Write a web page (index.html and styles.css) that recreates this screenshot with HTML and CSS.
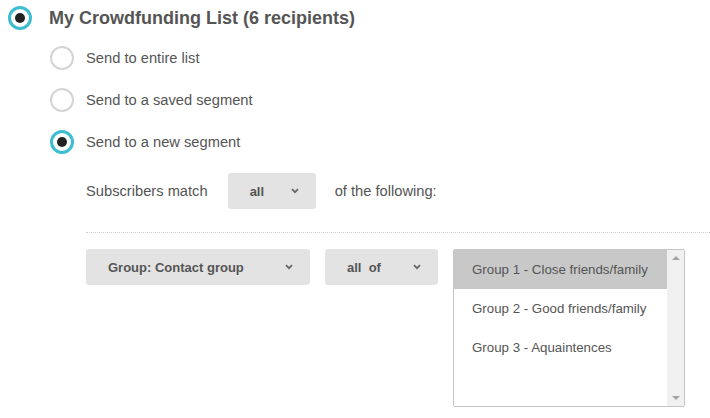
FILE: index.html
```html
<!DOCTYPE html>
<html>
<head>
<meta charset="utf-8">
<link rel="stylesheet" href="styles.css">
</head>
<body>
<div class="page">
  <div class="list-row">
    <span class="radio radio-lg checked"></span>
    <span class="list-title">My Crowdfunding List (6 recipients)</span>
  </div>
  <div class="options">
    <div class="opt"><span class="radio"></span><span class="opt-label">Send to entire list</span></div>
    <div class="opt"><span class="radio"></span><span class="opt-label">Send to a saved segment</span></div>
    <div class="opt"><span class="radio checked"></span><span class="opt-label">Send to a new segment</span></div>
  </div>
  <div class="segment">
    <div class="match-row">
      <span class="match-label">Subscribers match</span>
      <div class="select sel-all"><span>all</span><svg class="chev" width="8" height="6" viewBox="0 0 8 6"><path d="M1 1.2 L4 4.2 L7 1.2" fill="none" stroke="#666" stroke-width="1.8"/></svg></div>
      <span class="match-label">of the following:</span>
    </div>
    <div class="divider"></div>
    <div class="rule-row">
      <div class="select sel-group"><span>Group: Contact group</span><svg class="chev" width="8" height="6" viewBox="0 0 8 6"><path d="M1 1.2 L4 4.2 L7 1.2" fill="none" stroke="#666" stroke-width="1.8"/></svg></div>
      <div class="select sel-allof"><span>all&nbsp;&nbsp;of</span><svg class="chev" width="8" height="6" viewBox="0 0 8 6"><path d="M1 1.2 L4 4.2 L7 1.2" fill="none" stroke="#666" stroke-width="1.8"/></svg></div>
      <div class="listbox">
        <div class="lb-items">
          <div class="lb-item selected">Group 1 - Close friends/family</div>
          <div class="lb-item">Group 2 - Good friends/family</div>
          <div class="lb-item">Group 3 - Aquaintences</div>
        </div>
        <div class="lb-scroll">
          <span class="arrow up"></span>
          <span class="arrow down"></span>
        </div>
      </div>
    </div>
  </div>
</div>
</body>
</html>
```
FILE: styles.css
```css
* { box-sizing: border-box; }
html, body { margin: 0; padding: 0; background: #fff; }
body {
  font-family: "Liberation Sans", Arial, sans-serif;
  color: #555;
  width: 710px;
  height: 418px;
  overflow: hidden;
}
.page { padding: 6px 0 0 8px; }

.radio {
  display: inline-flex;
  align-items: center;
  justify-content: center;
  width: 24px;
  height: 24px;
  border-radius: 50%;
  border: 2px solid #d4d4d4;
  background: #fff;
  flex: none;
}
.radio.checked { border: 3px solid #3dbdd1; }
.radio.checked::after {
  content: "";
  width: 10px;
  height: 10px;
  border-radius: 50%;
  background: #222;
}

.list-row {
  display: flex;
  align-items: center;
  height: 24px;
}
.list-title {
  margin-left: 17px;
  font-size: 18px;
  font-weight: bold;
  color: #555;
}

.options {
  padding-left: 42px;
  margin-top: 16px;
  display: flex;
  flex-direction: column;
  gap: 18px;
}
.opt {
  display: flex;
  align-items: center;
  height: 24px;
}
.opt-label {
  margin-left: 12px;
  font-size: 14.7px;
  color: #555;
}

.segment { padding-left: 78px; margin-top: 19px; }

.match-row {
  display: flex;
  align-items: center;
  height: 36px;
}
.match-label { font-size: 14.7px; color: #555; }

.select {
  display: flex;
  align-items: center;
  justify-content: space-between;
  height: 36px;
  background: #e3e3e3;
  border-radius: 3px;
  font-size: 13px;
  font-weight: bold;
  color: #555;
}
.chev { display: block; flex: none; }
.sel-all { width: 88px; margin: 0 19px 0 20px; padding: 0 17px 0 22px; }
.sel-group { width: 224px; padding: 0 17px 0 22px; }
.sel-allof { width: 113px; margin-left: 15px; padding: 0 17px 0 22px; }

.divider {
  margin-top: 23px;
  border-top: 1px dotted #cfcfcf;
  width: 624px;
}

.rule-row {
  display: flex;
  align-items: flex-start;
  margin-top: 16px;
}

.listbox {
  margin-left: 15px;
  width: 232px;
  height: 158px;
  border: 1px solid #c6c6c6;
  border-radius: 2px;
  display: flex;
  background: #fff;
}
.lb-items { flex: 1; }
.lb-item {
  height: 39px;
  display: flex;
  align-items: center;
  padding-left: 18px;
  font-size: 13.3px;
  color: #555;
}
.lb-item.selected { background: #c8c8c8; }
.lb-scroll {
  width: 17px;
  background: #f0f0f0;
  display: flex;
  flex-direction: column;
  justify-content: space-between;
  align-items: center;
  padding: 6px 0;
}
.arrow {
  width: 0;
  height: 0;
  border-left: 4px solid transparent;
  border-right: 4px solid transparent;
}
.arrow.up { border-bottom: 4px solid #a3a3a3; }
.arrow.down { border-top: 4px solid #a3a3a3; }
```
